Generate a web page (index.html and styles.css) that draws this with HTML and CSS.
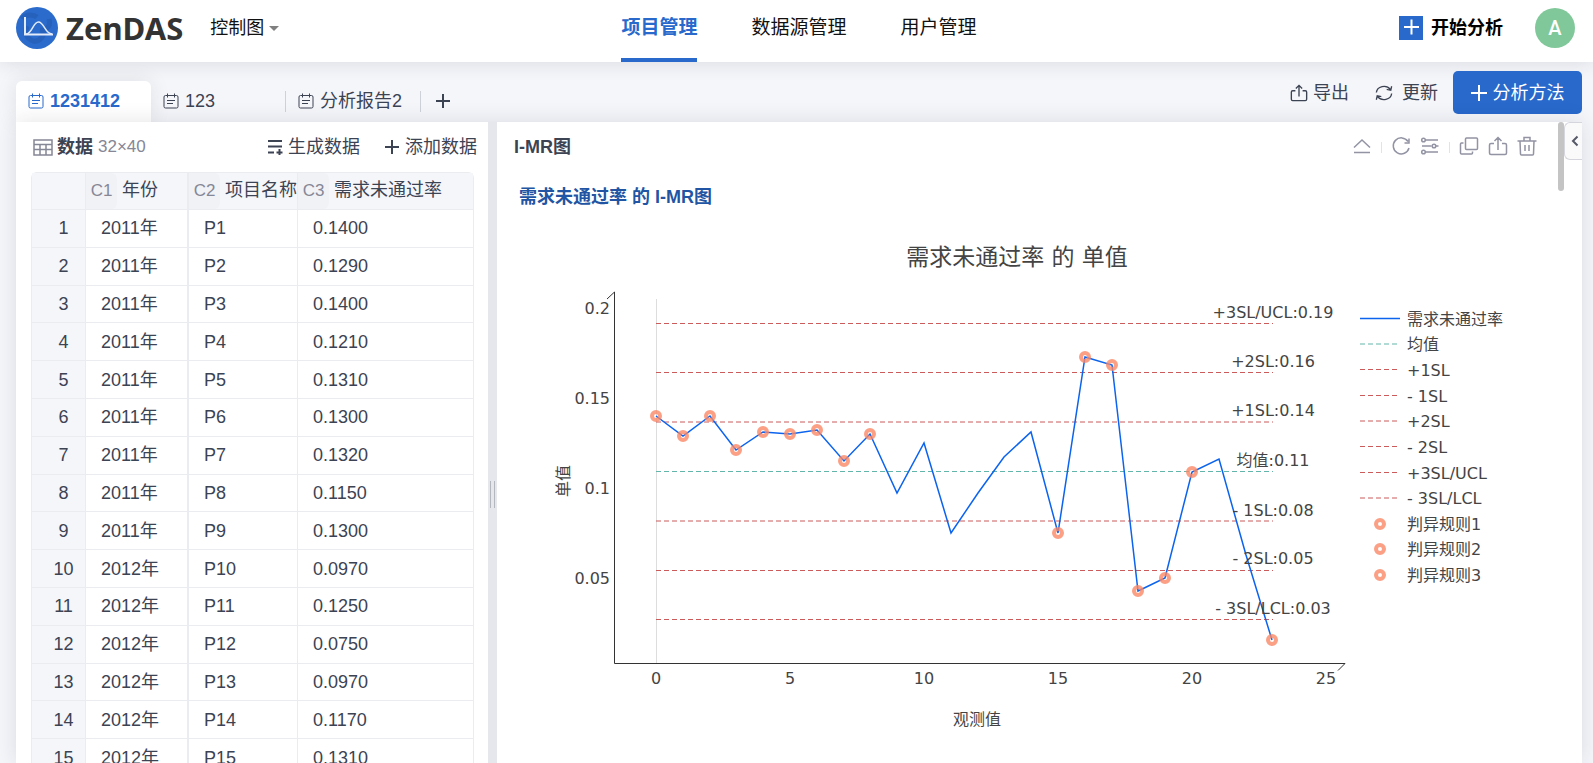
FILE: index.html
```
<!DOCTYPE html>
<html lang="zh-CN">
<head>
<meta charset="utf-8">
<title>ZenDAS</title>
<link rel="stylesheet" href="styles.css">
</head>
<body>
<header class="topbar">
  <div class="brand">
    <svg class="logo" viewBox="0 0 42 42" aria-hidden="true"><circle cx="21" cy="21" r="21" fill="#2a6bcc"/><path d="M6 12a11 11 0 0 1 15-2M27 22a9 9 0 0 1-10 12c-6-2-9-8-6-15M33 12c2 8-3 12-9 11" fill="none" stroke="#2661bb" stroke-width="5"/><path d="M9 10v17.500H37" fill="none" stroke="#e4ecf9" stroke-width="2"/><path d="M10 27c6 0 7-12 12.500-12S29 27 36 27" fill="none" stroke="#e4ecf9" stroke-width="1.500"/></svg>
    <span class="wordmark">ZenDAS</span>
    <button class="project">控制图<span class="caret"></span></button>
  </div>
  <nav class="nav">
    <a href="#" class="nav-link current">项目管理</a>
    <a href="#" class="nav-link">数据源管理</a>
    <a href="#" class="nav-link">用户管理</a>
  </nav>
  <div class="account">
    <button class="start"><svg class="start-icon" viewBox="0 0 24 24" aria-hidden="true"><path fill="#2869cb" d="M0 0h24v24H0z"/><path d="M12.500 3.500v15M5 11h15" stroke="#fff" stroke-width="2"/></svg>开始分析</button>
    <button class="avatar">A</button>
  </div>
</header>

<main class="workspace">
  <div class="tabbar">
    <div class="tabs">
      <button class="tab active"><svg class="tab-icon" viewBox="0 0 16 16" aria-hidden="true"><rect x="1" y="2.500" width="14" height="12.500" rx="1.500"/><path d="M4.500 .5v4M11.500 .5v4M4 7.500h8M4 10.500h6"/></svg>1231412</button>
      <button class="tab divided"><svg class="tab-icon" viewBox="0 0 16 16" aria-hidden="true"><rect x="1" y="2.500" width="14" height="12.500" rx="1.500"/><path d="M4.500 .5v4M11.500 .5v4M4 7.500h8M4 10.500h6"/></svg>123</button>
      <button class="tab divided"><svg class="tab-icon" viewBox="0 0 16 16" aria-hidden="true"><rect x="1" y="2.500" width="14" height="12.500" rx="1.500"/><path d="M4.500 .5v4M11.500 .5v4M4 7.500h8M4 10.500h6"/></svg>分析报告2</button>
      <button class="tab-add" aria-label="添加"><svg class="plus" viewBox="0 0 16 16"><path d="M8 1v14M1 8h14"/></svg></button>
    </div>
    <div class="tab-actions">
      <button class="text-button"><svg class="icon" viewBox="0 0 20 20" aria-hidden="true"><path d="M6 7.500H3a1.500 1.500 0 0 0-1.500 1.500v8a1.500 1.500 0 0 0 1.500 1.500h14a1.500 1.500 0 0 0 1.500-1.500V9A1.500 1.500 0 0 0 17 7.500h-3M10 14V2M6.500 5 10 1.500 13.500 5"/></svg>导出</button>
      <button class="text-button refresh"><svg class="icon" viewBox="0 0 20 20" aria-hidden="true"><path d="M1.500 9.500A8.500 7.500 0 0 1 17 6M18.500 10.500A8.500 7.500 0 0 1 3 14M18.500 2.500 17.500 7l-4.500-1M1.500 17.500 2.500 13l4.500 1"/></svg>更新</button>
      <button class="primary"><svg class="plus" viewBox="0 0 16 16" aria-hidden="true"><path d="M8 0v16M0 8h16"/></svg>分析方法</button>
    </div>
  </div>

  <div class="panels">
    <section class="data-panel">
      <div class="data-head">
        <svg class="icon grid-icon" viewBox="0 0 20 17" aria-hidden="true"><path d="M1 1h18v15H1zM1 5.500h18M1 10.500h18M7 5.500V16M13 5.500V16"/></svg>
        <h2 class="data-title">数据</h2><span class="data-size">32×40</span>
        <div class="data-actions">
          <button class="text-button"><svg class="plus" viewBox="0 0 16 16" aria-hidden="true"><path d="M1 2h14M1 7.500h14M1 13.500h6M12.500 10v6M9.500 13.500h6"/></svg>生成数据</button>
          <button class="text-button"><svg class="plus" viewBox="0 0 16 16" aria-hidden="true"><path d="M8 1v14M1 8h14"/></svg>添加数据</button>
        </div>
      </div>
      <table class="sheet">
        <colgroup><col class="col-index"><col class="col-year"><col class="col-name"><col></colgroup>
        <thead><tr><th></th><th><span class="tag">C1</span>年份</th><th><span class="tag">C2</span>项目名称</th><th><span class="tag">C3</span>需求未通过率</th></tr></thead>
        <tbody>
          <tr><th>1</th><td>2011年</td><td>P1</td><td>0.1400</td></tr>
          <tr><th>2</th><td>2011年</td><td>P2</td><td>0.1290</td></tr>
          <tr><th>3</th><td>2011年</td><td>P3</td><td>0.1400</td></tr>
          <tr><th>4</th><td>2011年</td><td>P4</td><td>0.1210</td></tr>
          <tr><th>5</th><td>2011年</td><td>P5</td><td>0.1310</td></tr>
          <tr><th>6</th><td>2011年</td><td>P6</td><td>0.1300</td></tr>
          <tr><th>7</th><td>2011年</td><td>P7</td><td>0.1320</td></tr>
          <tr><th>8</th><td>2011年</td><td>P8</td><td>0.1150</td></tr>
          <tr><th>9</th><td>2011年</td><td>P9</td><td>0.1300</td></tr>
          <tr><th>10</th><td>2012年</td><td>P10</td><td>0.0970</td></tr>
          <tr><th>11</th><td>2012年</td><td>P11</td><td>0.1250</td></tr>
          <tr><th>12</th><td>2012年</td><td>P12</td><td>0.0750</td></tr>
          <tr><th>13</th><td>2012年</td><td>P13</td><td>0.0970</td></tr>
          <tr><th>14</th><td>2012年</td><td>P14</td><td>0.1170</td></tr>
          <tr><th>15</th><td>2012年</td><td>P15</td><td>0.1310</td></tr>
        </tbody>
      </table>
    </section>

    <div class="splitter"><span class="grip"></span></div>

    <section class="report">
      <div class="report-head">
        <h2 class="report-title">I-MR图</h2>
        <div class="tools">
          <button class="tool" aria-label="收起"><svg class="icon" viewBox="0 0 20 20"><path d="M2 11.500 10 4l8 7.500M2 16.500h16"/></svg></button>
          <span class="tool-line"></span>
          <button class="tool" aria-label="刷新"><svg class="icon" viewBox="0 0 20 20"><path d="M17 5.500A8 8 0 1 0 18 12M18 2.500v4.500h-4.500"/></svg></button>
          <button class="tool" aria-label="设置"><svg class="icon" viewBox="0 0 20 20"><path d="M5.500 4H18M2 10h9.500M16 10h2.500M5.500 16H18"/><circle cx="3.500" cy="4" r="1.800"/><circle cx="14" cy="10" r="1.800"/><circle cx="3.500" cy="16" r="1.800"/></svg></button>
          <span class="tool-line"></span>
          <button class="tool" aria-label="复制"><svg class="icon" viewBox="0 0 20 20"><rect x="6.500" y="2" width="12" height="11.500" rx="1"/><path d="M4.500 7H2.500a1 1 0 0 0-1 1v9a1 1 0 0 0 1 1h10a1 1 0 0 0 1-1v-1.500"/></svg></button>
          <button class="tool" aria-label="导出"><svg class="icon" viewBox="0 0 20 20"><path d="M6 7.500H3a1.500 1.500 0 0 0-1.500 1.500v8a1.500 1.500 0 0 0 1.500 1.500h14a1.500 1.500 0 0 0 1.500-1.500V9A1.500 1.500 0 0 0 17 7.500h-3M10 14V2M6.500 5 10 1.500 13.500 5"/></svg></button>
          <button class="tool" aria-label="删除"><svg class="icon" viewBox="0 0 20 20"><path d="M.5 5h19M7 4.500v-3h6v3M3 5l.5 13a1 1 0 0 0 1 1h11a1 1 0 0 0 1-1L17 5M8 9v6M12 9v6"/></svg></button>
        </div>
      </div>
      <h3 class="chart-heading">需求未通过率 的 I-MR图</h3>
      <svg class="chart" viewBox="500 215 1060 548" role="img" aria-label="需求未通过率 的 单值">
        <text class="chart-title" x="1017" y="265">需求未通过率 的 单值</text>
        <path class="zero" d="M656.500 299v364"/>
        <path class="axis" d="M607 299l7.500-7v371.500H1345l-7 7"/>
        <g class="limit">
          <path d="M656 323.500h617"/><path d="M656 372.500h617"/><path d="M656 422h617"/>
          <path class="mean" d="M656 471.500h617"/>
          <path d="M656 521h617"/><path d="M656 570.500h617"/><path d="M656 619.500h617"/>
        </g>
        <polyline class="series" points="656,416 683,436 710,416 736,450 763,432 790,434 817,430 844,461 870,434 897,493 924,443 951,533 978,493 1004,457 1031,432 1058,533 1085,357 1112,365 1138,591 1165,578 1192,472 1219,459 1246,555 1272,640"/>
        <g class="marks">
          <circle cx="656" cy="416" r="4"/><circle cx="683" cy="436" r="4"/><circle cx="710" cy="416" r="4"/><circle cx="736" cy="450" r="4"/><circle cx="763" cy="432" r="4"/><circle cx="790" cy="434" r="4"/><circle cx="817" cy="430" r="4"/><circle cx="844" cy="461" r="4"/><circle cx="870" cy="434" r="4"/><circle cx="1058" cy="533" r="4"/><circle cx="1085" cy="357" r="4"/><circle cx="1112" cy="365" r="4"/><circle cx="1138" cy="591" r="4"/><circle cx="1165" cy="578" r="4"/><circle cx="1192" cy="472" r="4"/><circle cx="1272" cy="640" r="4"/>
        </g>
        <g class="label end"><text x="610" y="314">0.2</text><text x="610" y="404">0.15</text><text x="610" y="494">0.1</text><text x="610" y="584">0.05</text></g>
        <g class="label middle">
          <text x="656" y="684">0</text><text x="790" y="684">5</text><text x="924" y="684">10</text><text x="1058" y="684">15</text><text x="1192" y="684">20</text><text x="1326" y="684">25</text>
          <text x="977" y="725">观测值</text><text transform="translate(569 481) rotate(-90)">单值</text>
          <text x="1273" y="318">+3SL/UCL:0.19</text><text x="1273" y="367">+2SL:0.16</text><text x="1273" y="416">+1SL:0.14</text><text x="1273" y="466">均值:0.11</text><text x="1273" y="516">- 1SL:0.08</text><text x="1273" y="564">- 2SL:0.05</text><text x="1273" y="614">- 3SL/LCL:0.03</text>
        </g>
        <path class="series" d="M1360 318.500h40"/>
        <g class="limit"><path class="mean" d="M1360 344h40"/><path d="M1360 369.500h40"/><path d="M1360 395.500h40"/><path d="M1360 421h40"/><path d="M1360 446.500h40"/><path d="M1360 472.500h40"/><path d="M1360 498h40"/></g>
        <g class="marks"><circle cx="1380" cy="524" r="4"/><circle cx="1380" cy="549" r="4"/><circle cx="1380" cy="575" r="4"/></g>
        <g class="label"><text x="1407" y="325">需求未通过率</text><text x="1407" y="350">均值</text><text x="1407" y="376">+1SL</text><text x="1407" y="402">- 1SL</text><text x="1407" y="427">+2SL</text><text x="1407" y="453">- 2SL</text><text x="1407" y="479">+3SL/UCL</text><text x="1407" y="504">- 3SL/LCL</text><text x="1407" y="530">判异规则1</text><text x="1407" y="555">判异规则2</text><text x="1407" y="581">判异规则3</text></g>
      </svg>
      <span class="scrollbar"></span>
      <button class="drawer" aria-label="展开"><svg viewBox="0 0 8 12"><path d="M6.500 1.500 2 6l4.500 4.500"/></svg></button>
    </section>
  </div>
</main>
</body>
</html>
```
FILE: styles.css
```
* { box-sizing: border-box; }

body {
  margin: 0;
  height: 100vh;
  overflow: hidden;
  display: flex;
  flex-direction: column;
  background: #f5f6fa;
  color: #3c4353;
  font: 18px/24px "Liberation Sans", "Noto Sans CJK SC", sans-serif;
}

button {
  border: 0;
  padding: 0;
  background: none;
  color: inherit;
  font: inherit;
  display: flex;
  align-items: center;
  white-space: nowrap;
}

svg { display: block; flex: none; }
h2, h3 { margin: 0; font-size: 18px; line-height: 24px; }

.topbar {
  height: 62px;
  flex: none;
  display: grid;
  grid-template-columns: 1fr auto 1fr;
  background: #fff;
  box-shadow: 0 0 20px rgba(30, 35, 50, .14);
}
.brand { display: flex; align-items: center; padding: 0 0 6px 16px; }
.logo { width: 42px; height: 42px; }
.wordmark { margin-left: 8px; color: #333; font: bold 31px/40px "Noto Sans", sans-serif; }
.project { margin-left: 27px; color: #111; }
.caret { margin-left: 5px; border: 5px solid transparent; border-top-color: #808080; border-bottom: 0; }
.nav { display: flex; gap: 54px; padding-left: 5px; font-size: 19px; }
.nav-link { padding: 16px 0 18px; color: #111; text-decoration: none; border-bottom: 4px solid transparent; }
.nav-link.current { color: #2869cb; border-color: #2869cb; font-weight: bold; }
.account { display: flex; align-items: center; justify-content: flex-end; gap: 32px; padding: 0 18px 6px 0; }
.start { gap: 8px; color: #000; font-weight: bold; }
.start-icon { width: 24px; height: 24px; }
.avatar { width: 40px; height: 40px; border-radius: 50%; justify-content: center; background: #80c899; color: #fff; font: 500 20px/24px Roboto, sans-serif; }

.workspace { flex: 1; min-height: 0; display: flex; flex-direction: column; padding: 0 11px 0 16px; }
.tabbar { height: 60px; flex: none; display: flex; justify-content: space-between; align-items: flex-end; }
.tabs { display: flex; }
.tab { position: relative; width: 135px; height: 41px; padding: 0 0 2px 12px; gap: 6px; border-radius: 6px 6px 0 0; }
.tab.active { background: #fff; color: #2869cb; font-weight: bold; box-shadow: 0 0 20px rgba(30, 35, 50, .1); }
.tab.divided::after { content: ""; position: absolute; right: 0; top: 10px; height: 21px; border-right: 1px solid #cfd1d9; }
.tab-icon { width: 16px; height: 16px; fill: none; stroke: currentColor; stroke-width: 1; }
.tab-add { height: 41px; padding: 0 0 2px 14px; }
.plus { width: 16px; height: 16px; fill: none; stroke: currentColor; stroke-width: 2; }
.tab-actions { display: flex; align-items: center; gap: 26px; padding-bottom: 8px; }
.text-button { gap: 5px; }
.refresh { gap: 9px; }
.icon { width: 18px; height: 18px; fill: none; stroke: currentColor; stroke-width: 1.5; }
.primary { width: 129px; height: 43px; margin-left: -11px; gap: 6px; justify-content: center; border-radius: 5px; background: #2869cb; color: #fff; }

.panels { position: relative; flex: 1; min-height: 0; display: flex; background: #fff; box-shadow: 0 0 20px rgba(30, 35, 50, .12); }
.data-panel { flex: none; width: 472px; padding: 0 14px 0 15px; background: #fff; overflow: hidden; }
.data-head { height: 50px; display: flex; align-items: center; padding-left: 2px; margin-right: -3px; }
.grid-icon { width: 20px; height: 17px; color: #858796; }
.data-title { margin-left: 4px; }
.data-size { margin-left: 5px; color: #858796; font-size: 17px; }
.data-actions { display: flex; gap: 24px; margin-left: auto; }
.data-actions .text-button { gap: 5px; }

.sheet { width: 100%; height: 606px; table-layout: fixed; border-collapse: separate; border-spacing: 0; border: 1px solid #ebecf0; border-radius: 6px 6px 0 0; }
.col-index { width: 54px; }
.col-year { width: 103px; }
.col-name { width: 109px; }
.sheet th, .sheet td { padding: 0; border-right: 1px solid #ebecf0; border-bottom: 1px solid #ebecf0; font-weight: normal; text-align: left; white-space: nowrap; }
.sheet tr > :last-child { border-right: 0; }
.sheet td { padding-left: 15px; }
.sheet td:nth-child(2), .sheet thead th:nth-child(2) { border-right-width: 2px; }
.sheet th { background: #f5f6fa; }
.sheet tbody th { padding-left: 10px; text-align: center; }
.tag { display: inline-block; width: 31px; margin-right: 5px; padding: 6px 0; border-radius: 0 6px 6px 0; background: #f1f2f6; color: #858796; font-size: 17px; text-align: center; }

.splitter { width: 9px; flex: none; display: flex; align-items: center; justify-content: center; padding-top: 104px; background: #e6e7ec; }
.grip { width: 5px; height: 27px; border: solid #b5b7bf; border-width: 0 1px; }

.report { position: relative; flex: 1; min-width: 0; padding-left: 3px; }
.report-head { height: 50px; display: flex; align-items: center; justify-content: space-between; padding: 0 45px 0 14px; }
.tools { display: flex; align-items: center; gap: 9px; color: #9293a3; }
.tool { padding-bottom: 2px; }
.tool .icon { width: 20px; height: 20px; }
.tool-line { width: 1px; height: 11px; background: #e2e3e8; }
.chart-heading { height: 43px; padding: 13px 0 0 19px; color: #2155a3; }
.chart { width: calc(100% - 22px); height: auto; font-family: "DejaVu Sans", "Noto Sans CJK SC", sans-serif; }
.chart-title { font-size: 23px; fill: #444; text-anchor: middle; }
.label { font-size: 16px; fill: #444; }
.end { text-anchor: end; }
.middle { text-anchor: middle; }
.axis { fill: none; stroke: #333; }
.zero { stroke: #ddd; }
.limit { stroke: #cb5b5b; stroke-dasharray: 5 3; }
.mean { stroke: #62b5aa; }
.series { fill: none; stroke: #0b63ee; stroke-width: 1.5; }
.marks { fill: none; stroke: #fa8766; stroke-width: 4; stroke-opacity: .8; }

.scrollbar { position: absolute; right: 18px; top: 0; width: 6px; height: 69px; border-radius: 3px; background: #c4c4c4; }
.drawer { position: absolute; right: 0; top: 0; width: 18px; height: 38px; padding-left: 3px; justify-content: center; border: 1px solid #d5d6dd; border-right: 0; border-radius: 6px 0 0 6px; background: #fafafa; }
.drawer svg { width: 8px; height: 12px; fill: none; stroke: #555967; stroke-width: 2; }
```
